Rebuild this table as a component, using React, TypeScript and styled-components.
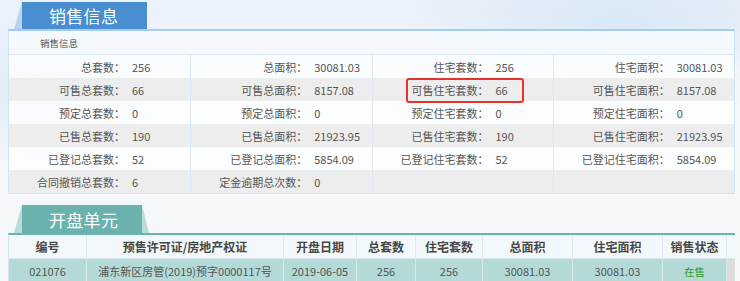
import React from "react"
import styled, { createGlobalStyle } from "styled-components"

const GlobalStyle = createGlobalStyle`
    html, body {
        margin: 0;
        padding: 0;
    }
    body {
        width: 740px;
        height: 281px;
        overflow: hidden;
        font-family: "Noto Sans CJK SC", "Noto Sans", sans-serif;
        background:
            radial-gradient(ellipse 220px 60px at 620px 20px, rgba(214, 230, 245, 0.9), rgba(214, 230, 245, 0) 100%),
            radial-gradient(ellipse 120px 80px at 40px 90px, rgba(220, 232, 244, 0.9), rgba(220, 232, 244, 0) 100%),
            linear-gradient(180deg, #e9f1f9 0%, #f3f7fb 35%, #f6f8fa 100%);
    }
`

const Page = styled.div`
    display: flex;
    flex-direction: column;
    padding: 2px 5px 0 8px;
`

const TabRow = styled.div`
    display: flex;
    padding-left: 14px;
`

const Tab = styled.div<{ $bg: string; $edge: string; $h: number; $w: number; $rightEdge?: boolean }>`
    position: relative;
    width: ${p => p.$w}px;
    height: ${p => p.$h}px;
    box-sizing: border-box;
    padding-left: 27px;
    display: flex;
    align-items: center;
    background: ${p => p.$bg};
    color: #fff;
    font-size: 17px;
    letter-spacing: 0.3px;
    &::before {
        content: '';
        position: absolute;
        left: -8px;
        top: 0;
        width: 8px;
        height: 100%;
        background: ${p => p.$edge};
        clip-path: polygon(100% 0, 100% 100%, 0 100%);
    }
    &::after {
        content: '';
        position: absolute;
        right: -7px;
        top: 0;
        width: 7px;
        height: 100%;
        display: ${p => (p.$rightEdge ? 'block' : 'none')};
        background: ${p => p.$edge};
        clip-path: polygon(0 0, 100% 100%, 0 100%);
    }
`

const InfoPanel = styled.div`
    border: 1px solid #d3e3f0;
    border-top: 2px solid #a6cdee;
    background: rgba(255, 255, 255, 0.45);
`

const PanelHead = styled.div`
    height: 23px;
    display: flex;
    align-items: center;
    padding-left: 31px;
    font-size: 9.5px;
    color: #555;
    background: rgba(245, 249, 253, 0.85);
    border-bottom: 1px solid #dbe8f3;
`

const InfoRow = styled.div<{ $alt: boolean }>`
    display: grid;
    grid-template-columns: repeat(4, 1fr);
    height: 23px;
    background: ${p => (p.$alt ? 'rgba(236, 236, 236, 0.92)' : 'rgba(255, 255, 255, 0.55)')};
    font-size: 11px;
    color: #555;
`

const Group = styled.div<{ $first: boolean }>`
    position: relative;
    display: flex;
    align-items: center;
    border-left: ${p => (p.$first ? 'none' : '1px solid #dce9f4')};
`

const Label = styled.span`
    width: 116px;
    text-align: right;
    white-space: nowrap;
`

const Value = styled.span`
    padding-left: 7px;
`

const Highlight = styled.div`
    position: absolute;
    left: 33px;
    top: 0;
    width: 118px;
    height: 25px;
    box-sizing: border-box;
    border: 2px solid #e8322c;
    border-radius: 3px;
`

const UnitTabRow = styled(TabRow)`
    margin-top: 11px;
    padding-left: 14px;
`

const UnitTable = styled.div`
    border-top: 2px solid #6cb3b0;
    border-left: 1px solid #d3e3f0;
`

const columns = '78px 197px 73px 59px 67px 90px 90px 64px 1fr'

const HeadRow = styled.div`
    display: grid;
    grid-template-columns: ${columns};
    height: 23px;
    background: #f2f8fc;
    border-bottom: 1px solid #dbe9ef;
`

const HeadCell = styled.div`
    display: flex;
    align-items: center;
    justify-content: center;
    font-size: 12px;
    font-weight: 700;
    color: #474747;
    border-right: 1px solid #dde9f1;
    &:last-child {
        border-right: none;
    }
`

const BodyRow = styled.div`
    display: grid;
    grid-template-columns: ${columns};
    height: 24px;
    background: #b4dad8;
`

const BodyCell = styled.div<{ $status?: boolean }>`
    display: flex;
    align-items: center;
    justify-content: center;
    font-size: ${p => (p.$status ? '10.5px' : '11px')};
    color: ${p => (p.$status ? '#2f9b2f' : '#555')};
    border-right: 1px solid #d3eae8;
`

const ScrollStrip = styled.div`
    background: #dcdcdc;
`

const info = [
    [['总套数：', '256'], ['总面积：', '30081.03'], ['住宅套数：', '256'], ['住宅面积：', '30081.03']],
    [['可售总套数：', '66'], ['可售总面积：', '8157.08'], ['可售住宅套数：', '66'], ['可售住宅面积：', '8157.08']],
    [['预定总套数：', '0'], ['预定总面积：', '0'], ['预定住宅套数：', '0'], ['预定住宅面积：', '0']],
    [['已售总套数：', '190'], ['已售总面积：', '21923.95'], ['已售住宅套数：', '190'], ['已售住宅面积：', '21923.95']],
    [['已登记总套数：', '52'], ['已登记总面积：', '5854.09'], ['已登记住宅套数：', '52'], ['已登记住宅面积：', '5854.09']],
    [['合同撤销总套数：', '6'], ['定金逾期总次数：', '0'], ['', ''], ['', '']],
]

const heads = ['编号', '预售许可证/房地产权证', '开盘日期', '总套数', '住宅套数', '总面积', '住宅面积', '销售状态']
const unit = ['021076', '浦东新区房管(2019)预字0000117号', '2019-06-05', '256', '256', '30081.03', '30081.03']

export default function App() {
    return (
        <>
            <GlobalStyle />
            <Page>
                <TabRow>
                    <Tab $bg="#4a8ed2" $edge="#b7d3ee" $h={27} $w={125}>销售信息</Tab>
                </TabRow>
                <InfoPanel>
                    <PanelHead>销售信息</PanelHead>
                    {info.map((row, r) => (
                        <InfoRow key={r} $alt={r % 2 === 1}>
                            {row.map(([label, value], g) => (
                                <Group key={g} $first={g === 0}>
                                    <Label>{label}</Label>
                                    <Value>{value}</Value>
                                    {r === 1 && g === 2 && <Highlight />}
                                </Group>
                            ))}
                        </InfoRow>
                    ))}
                </InfoPanel>

                <UnitTabRow>
                    <Tab $bg="#69b2ae" $edge="#b9dcda" $h={28} $w={120} $rightEdge>开盘单元</Tab>
                </UnitTabRow>
                <UnitTable>
                    <HeadRow>
                        {heads.map(h => <HeadCell key={h}>{h}</HeadCell>)}
                        <span />
                    </HeadRow>
                    <BodyRow>
                        {unit.map((v, i) => <BodyCell key={i}>{v}</BodyCell>)}
                        <BodyCell $status>在售</BodyCell>
                        <ScrollStrip />
                    </BodyRow>
                </UnitTable>
            </Page>
        </>
    )
}
